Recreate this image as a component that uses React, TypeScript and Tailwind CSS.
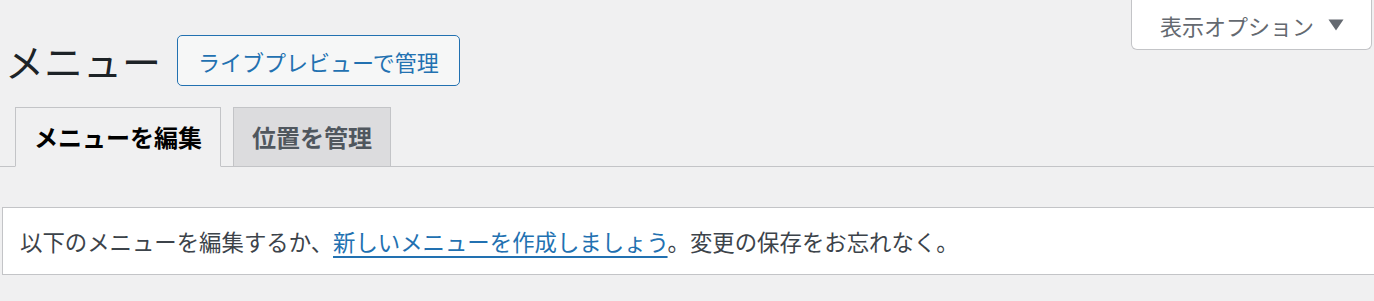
export default function App() {
  return (
    <div
      className="w-[1374px] h-[301px] overflow-hidden bg-[#f0f0f1] text-[#3c434a]"
      style={{ fontFamily: '"Noto Sans CJK JP", "Noto Sans", sans-serif' }}
    >
      {/* header row: title + live preview, screen options on the right */}
      <div className="flex justify-between items-start">
        <div className="flex items-center mt-[35px] pl-[5px]">
          <h1 className="text-[39px] leading-none text-[#1d2327] font-normal">メニュー</h1>
          <button className="ml-[16px] h-[51px] px-[20px] border border-solid border-[#2271b1] rounded-[5px] bg-[#f6f7f7] text-[#2271b1] text-[22px] leading-none">
            ライブプレビューで管理
          </button>
        </div>
        <button className="mr-[2px] w-[241px] h-[50px] bg-white border border-t-0 border-[#c3c4c7] rounded-b-[6px] flex items-center pl-[28px] text-[#646970] text-[22px] leading-none">
          <span>表示オプション</span>
          <svg className="ml-[14px]" width="16" height="12" viewBox="0 0 16 12">
            <polygon points="0.5,0.5 15.5,0.5 8,11.5" fill="#646970" />
          </svg>
        </button>
      </div>

      {/* tabs */}
      <div className="mt-[21px] flex items-end gap-[12px] pl-[15px] border-b border-[#c3c4c7]">
        <div className="-mb-px h-[60px] px-[18px] flex items-center border border-[#c3c4c7] border-b-[#f0f0f1] bg-[#f0f0f1] text-black text-[24px] font-semibold leading-none">
          メニューを編集
        </div>
        <div className="-mb-px h-[60px] px-[18px] flex items-center border border-[#c3c4c7] bg-[#dcdcde] text-[#50575e] text-[24px] font-semibold leading-none">
          位置を管理
        </div>
      </div>

      {/* notice */}
      <div className="mt-[40px] ml-[2px] w-[1400px] h-[68px] bg-white border border-[#c3c4c7] flex items-center pl-[17px] text-[22.4px] leading-none">
        <p>
          以下のメニューを編集するか、
          <a className="text-[#2271b1] underline underline-offset-[5px]" href="#">
            新しいメニューを作成しましょう
          </a>
          。変更の保存をお忘れなく。
        </p>
      </div>
    </div>
  );
}
